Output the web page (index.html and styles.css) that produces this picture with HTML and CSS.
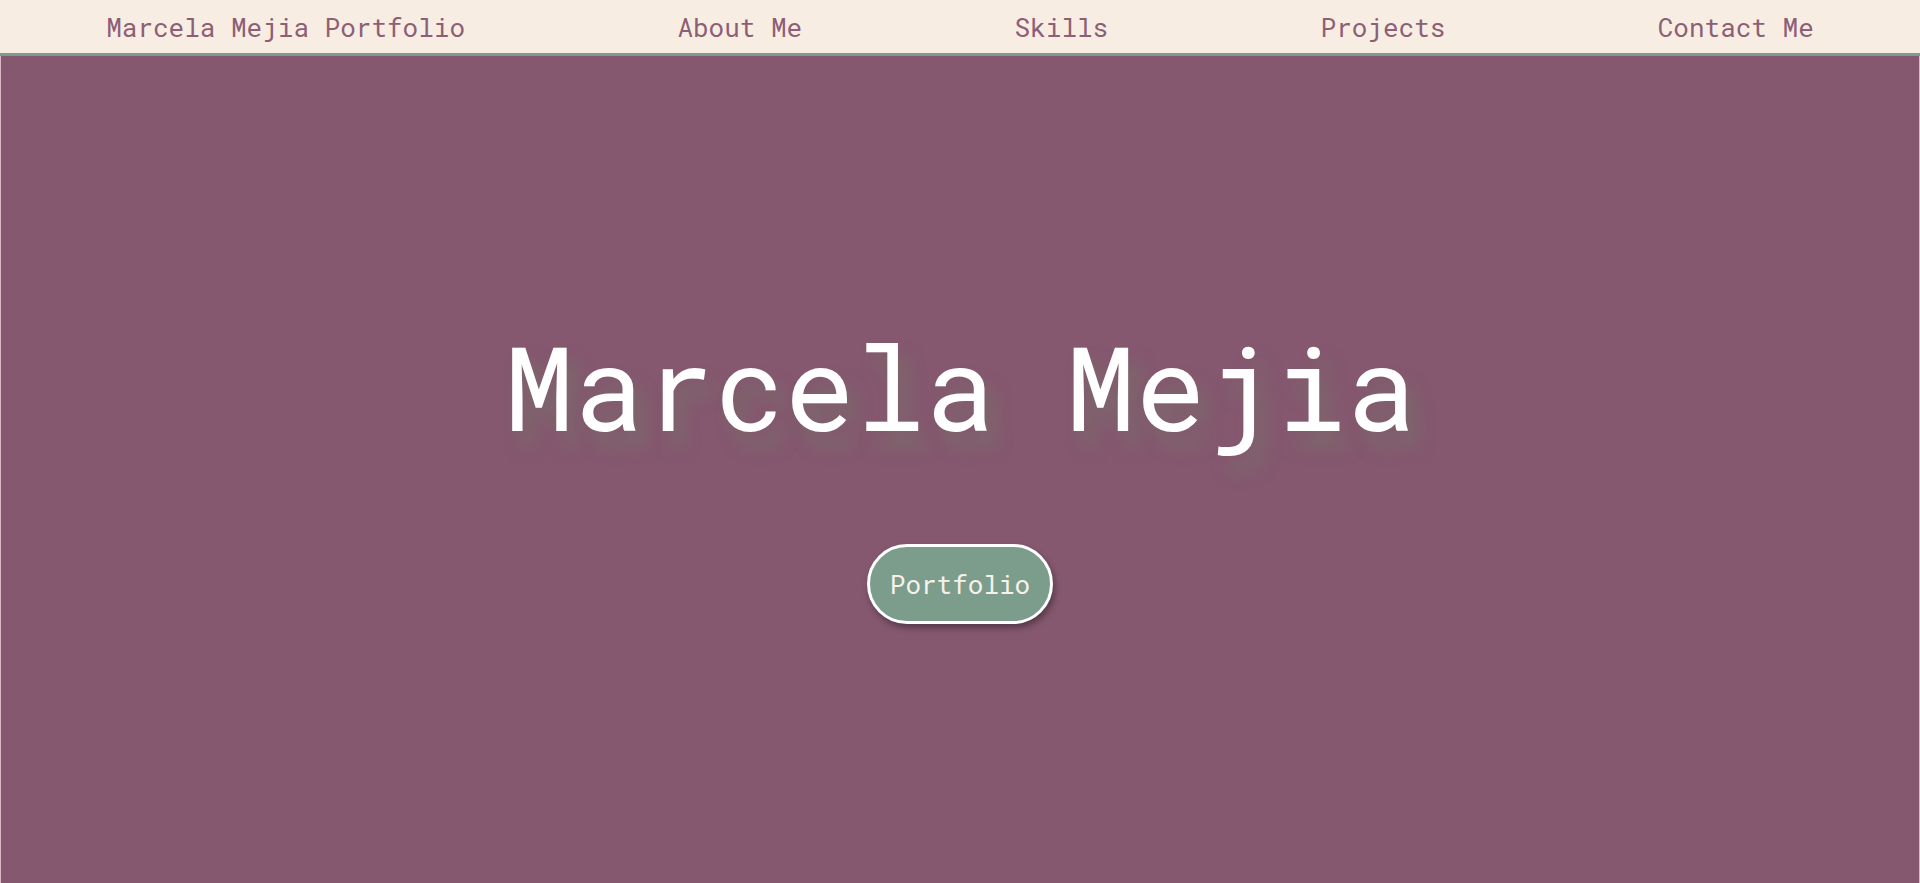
FILE: index.html
```html
<!DOCTYPE html>
<html lang="en">
<head>
<meta charset="utf-8">
<title>Marcela Mejia Portfolio</title>
<link rel="stylesheet" href="styles.css">
</head>
<body>
<header class="site-header">
  <nav class="nav">
    <a class="nav-link" href="#">Marcela Mejia Portfolio</a>
    <a class="nav-link" href="#about">About Me</a>
    <a class="nav-link" href="#skills">Skills</a>
    <a class="nav-link" href="#projects">Projects</a>
    <a class="nav-link" href="#contact">Contact Me</a>
  </nav>
</header>
<main class="hero">
  <h1 class="hero-title">Marcela Mejia</h1>
  <a class="hero-button" href="#projects">Portfolio</a>
</main>
</body>
</html>
```

FILE: styles.css
```css
* { box-sizing: border-box; }
html, body { margin: 0; padding: 0; }
body {
  font-family: "Roboto Mono", "DejaVu Sans Mono", "Liberation Mono", monospace;
  background: #85586f;
  overflow: hidden;
}
.site-header {
  background: #f8ede3;
  border-bottom: 3px solid #7d9d8c;
  height: 56px;
}
.nav {
  display: flex;
  justify-content: space-around;
  align-items: center;
  height: 53px;
}
.nav-link {
  color: #8d5f76;
  text-decoration: none;
  font-size: 26px;
  line-height: 1;
}
.hero {
  height: 827px;
  border-left: 1px solid #d8b8c2;
  border-right: 1px solid #d8b8c2;
  display: flex;
  flex-direction: column;
  align-items: center;
  padding-top: 260px;
}
.hero-title {
  margin: 0;
  color: #ffffff;
  font-weight: 400;
  font-size: 117px;
  line-height: 1.2;
  text-shadow: 10px 16px 16px rgba(115, 122, 105, 0.5);
}
.hero-button {
  margin-top: 88px;
  display: flex;
  align-items: center;
  justify-content: center;
  width: 186px;
  height: 80px;
  border: 3px solid #ffffff;
  border-radius: 40px;
  background: #7c9d8b;
  color: #f6f1ea;
  text-decoration: none;
  font-size: 26px;
  box-shadow: 2px 4px 6px rgba(0,0,0,0.35);
}
```
